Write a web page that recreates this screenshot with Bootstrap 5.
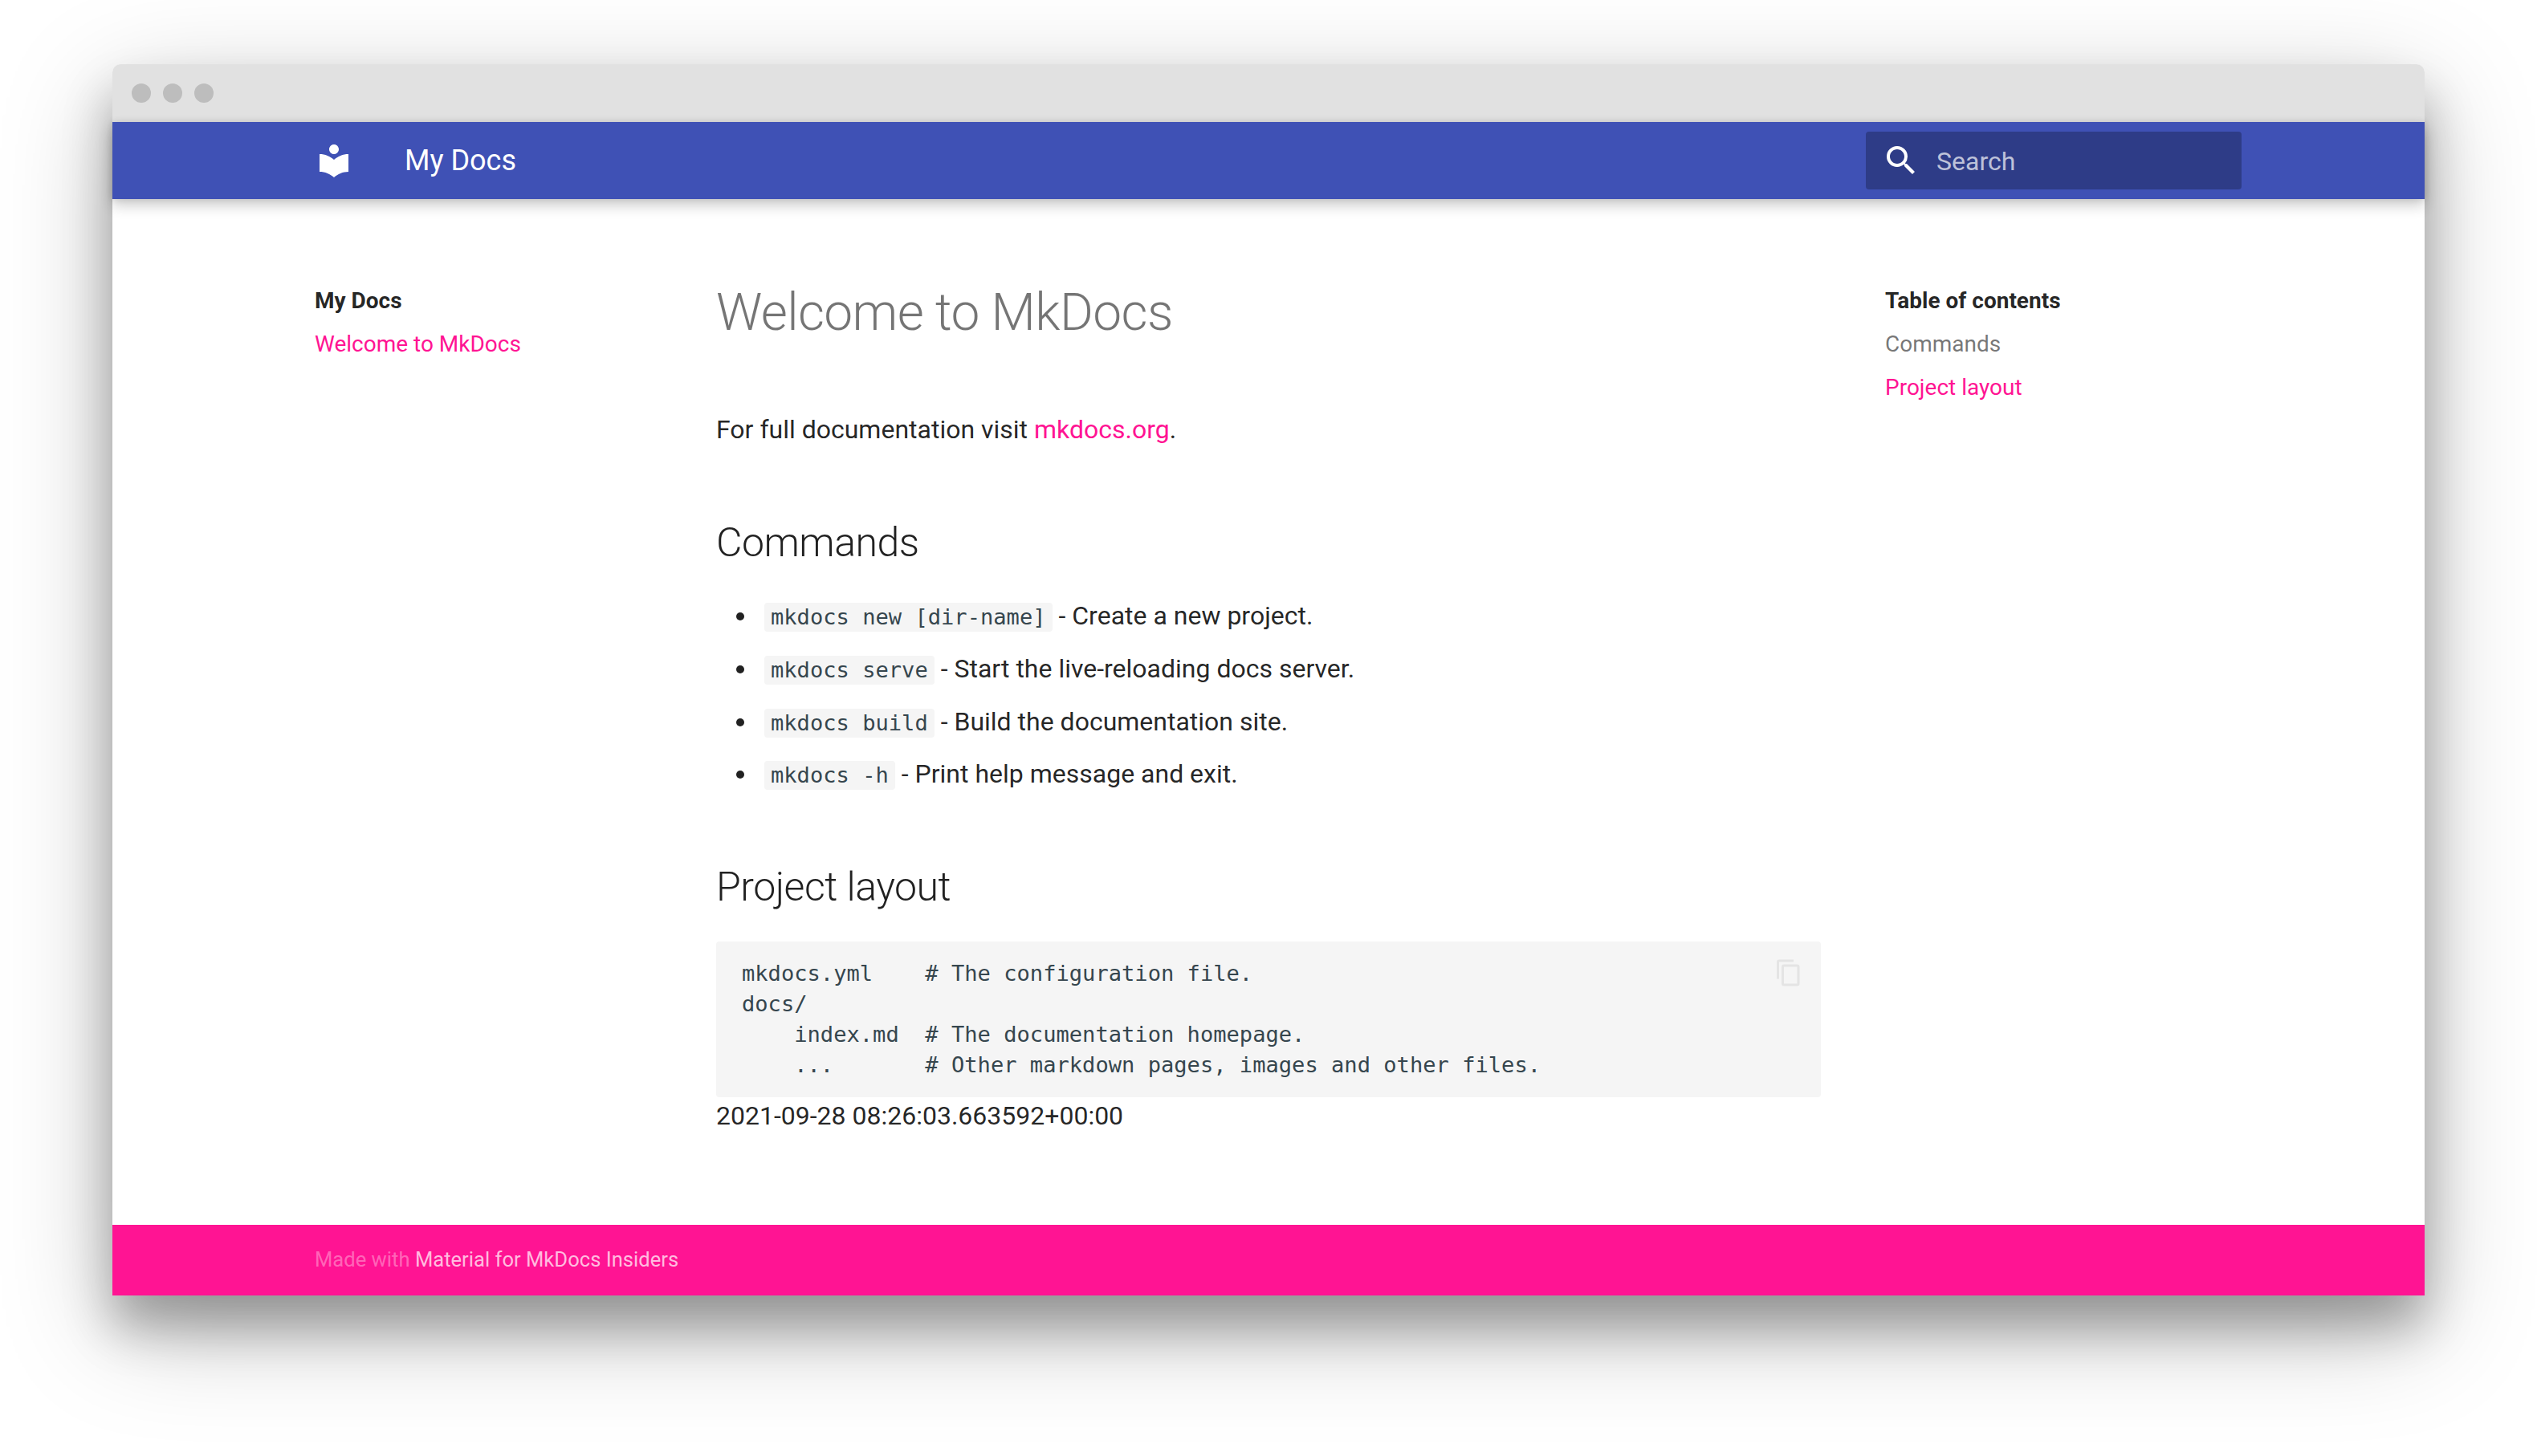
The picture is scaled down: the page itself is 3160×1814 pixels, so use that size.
<!DOCTYPE html>
<html lang="en">
<head>
<meta charset="utf-8">
<title>My Docs</title>
<link href="https://cdn.jsdelivr.net/npm/bootstrap@5.3.0/dist/css/bootstrap.min.css" rel="stylesheet">
<style>
html,body{background:#fff;margin:0}
body{font-family:Roboto,"Liberation Sans",sans-serif;color:rgba(0,0,0,.87);width:3160px;height:1814px;overflow:hidden}
.stage{padding:80px 140px}
.win{height:1534px;box-shadow:0 40px 60px rgba(0,0,0,.28),0 40px 136px rgba(0,0,0,.26);border-radius:10px;background:#fff}
.titlebar{height:72px;background:#e1e1e1;border-radius:10px 10px 0 0;padding-left:24px;gap:15px}
.dot{width:24px;height:24px;border-radius:50%;background:#bdbdbd}
.hdr{height:96px;background:#3f51b5;padding:0;box-shadow:0 0 8px rgba(0,0,0,.1),0 8px 16px rgba(0,0,0,.2);position:relative;color:#fff}
.hdr-logo{margin-left:252px;width:48px;height:48px;fill:#fff}
.hdr-title{margin-left:64px;font-size:36px;line-height:48px;color:#fff}
.searchbox{position:absolute;left:2184px;top:12px;width:468px;height:72px;background:#2e3c87;border-radius:4px;padding-left:20px}
.searchbox svg{width:48px;height:48px;fill:#fff}
.searchbox span{margin-left:20px;font-size:32px;line-height:72px;padding-top:2px;color:rgba(255,255,255,.7)}
.body-area{flex:1 1 auto}
.side-l{width:532px;padding:109px 0 0 32px;flex:none;margin-left:220px}
.sidetitle{font-size:28px;line-height:36.4px;font-weight:700;margin-bottom:17.6px;color:rgba(0,0,0,.87)}
.sidelink{display:block;font-size:28px;line-height:36.4px;margin-bottom:17.6px;text-decoration:none;color:#ff1493}
.sidelink.muted{color:rgba(0,0,0,.54)}
.doc{width:1376px;flex:none;padding-top:100px;font-size:32px;line-height:51.2px}
.doc h1{font-size:64px;font-weight:300;line-height:83px;letter-spacing:-.01em;color:rgba(0,0,0,.54);margin:0 0 79px}
.doc p{margin:0 0 80px}
.doc a{color:#ff1493;text-decoration:none}
.doc h2{font-size:50px;font-weight:300;line-height:70px;letter-spacing:-.01em;margin:0 0 31px;color:rgba(0,0,0,.87)}
.doc ul{margin:0 0 79.5px;padding-left:52px}
.doc li{margin-bottom:14.5px;padding-left:8px}
.doc li:last-child{margin-bottom:0}
.inl{display:inline-block;height:36px;line-height:36px;padding:0 8px;background:#f5f5f5;border-radius:4px;font-family:"DejaVu Sans Mono","Liberation Mono",monospace;font-size:27.1px;color:#36464e;vertical-align:baseline}
.blockwrap{position:relative;margin-top:33px}
.blockwrap pre{margin:0;background:#f5f5f5;border-radius:4px;padding:21px 32px;font-family:"DejaVu Sans Mono","Liberation Mono",monospace;font-size:27.1px;line-height:38px;color:#36464e;height:194px;overflow:hidden}
.copyic{position:absolute;right:22px;top:21px;width:36px;height:36px;fill:#e4e4e4}
.stamp{margin-top:-2px}
.side-r{margin-left:80px;padding-top:109px;flex:none;width:420px}
.foot{height:88px;background:#ff1493;padding:0 0 2px 252px;font-size:25.6px;border-radius:0;color:rgba(255,255,255,.36)}
.foot a{color:rgba(255,255,255,.72);text-decoration:none}
</style>
</head>
<body>
<div class="stage">
  <div class="win d-flex flex-column">
    <div class="titlebar d-flex align-items-center flex-none">
      <div class="dot"></div><div class="dot"></div><div class="dot"></div>
    </div>
    <nav class="navbar hdr d-flex align-items-center justify-content-start flex-nowrap">
      <svg class="hdr-logo" viewBox="0 0 24 24"><path d="M12 11.55C9.64 9.35 6.48 8 3 8v11c3.48 0 6.64 1.35 9 3.55 2.36-2.19 5.52-3.55 9-3.55V8c-3.48 0-6.64 1.35-9 3.55zM12 8c1.66 0 3-1.34 3-3s-1.34-3-3-3-3 1.34-3 3 1.34 3 3 3z"/></svg>
      <span class="hdr-title">My Docs</span>
      <div class="searchbox d-flex align-items-center">
        <svg viewBox="0 0 24 24"><path d="M15.5 14h-.79l-.28-.27A6.471 6.471 0 0 0 16 9.5 6.5 6.5 0 1 0 9.5 16c1.61 0 3.09-.59 4.23-1.57l.27.28v.79l5 4.99L20.49 19l-4.99-5zm-6 0C7.01 14 5 11.99 5 9.5S7.01 5 9.5 5 14 7.01 14 9.5 11.99 14 9.5 14z"/></svg>
        <span>Search</span>
      </div>
    </nav>
    <div class="body-area d-flex">
      <aside class="side-l">
        <div class="sidetitle">My Docs</div>
        <a class="sidelink" href="#">Welcome to MkDocs</a>
      </aside>
      <main class="doc">
        <h1>Welcome to MkDocs</h1>
        <p>For full documentation visit <a href="#">mkdocs.org</a>.</p>
        <h2>Commands</h2>
        <ul>
          <li><code class="inl">mkdocs new [dir-name]</code> - Create a new project.</li>
          <li><code class="inl">mkdocs serve</code> - Start the live-reloading docs server.</li>
          <li><code class="inl">mkdocs build</code> - Build the documentation site.</li>
          <li><code class="inl">mkdocs -h</code> - Print help message and exit.</li>
        </ul>
        <h2>Project layout</h2>
        <div class="blockwrap">
          <pre>mkdocs.yml    # The configuration file.
docs/
    index.md  # The documentation homepage.
    ...       # Other markdown pages, images and other files.</pre>
          <svg class="copyic" viewBox="0 0 24 24"><path d="M19 21H8V7h11m0-2H8a2 2 0 0 0-2 2v14a2 2 0 0 0 2 2h11a2 2 0 0 0 2-2V7a2 2 0 0 0-2-2m-3-4H4a2 2 0 0 0-2 2v14h2V3h12V1z"/></svg>
        </div>
        <div class="stamp">2021-09-28 08:26:03.663592+00:00</div>
      </main>
      <aside class="side-r">
        <div class="sidetitle">Table of contents</div>
        <a class="sidelink muted" href="#">Commands</a>
        <a class="sidelink" href="#">Project layout</a>
      </aside>
    </div>
    <footer class="foot d-flex align-items-center">
      <span>Made with <a href="#">Material for MkDocs Insiders</a></span>
    </footer>
  </div>
</div>
<script src="https://cdn.jsdelivr.net/npm/bootstrap@5.3.0/dist/js/bootstrap.bundle.min.js"></script>
</body>
</html>
